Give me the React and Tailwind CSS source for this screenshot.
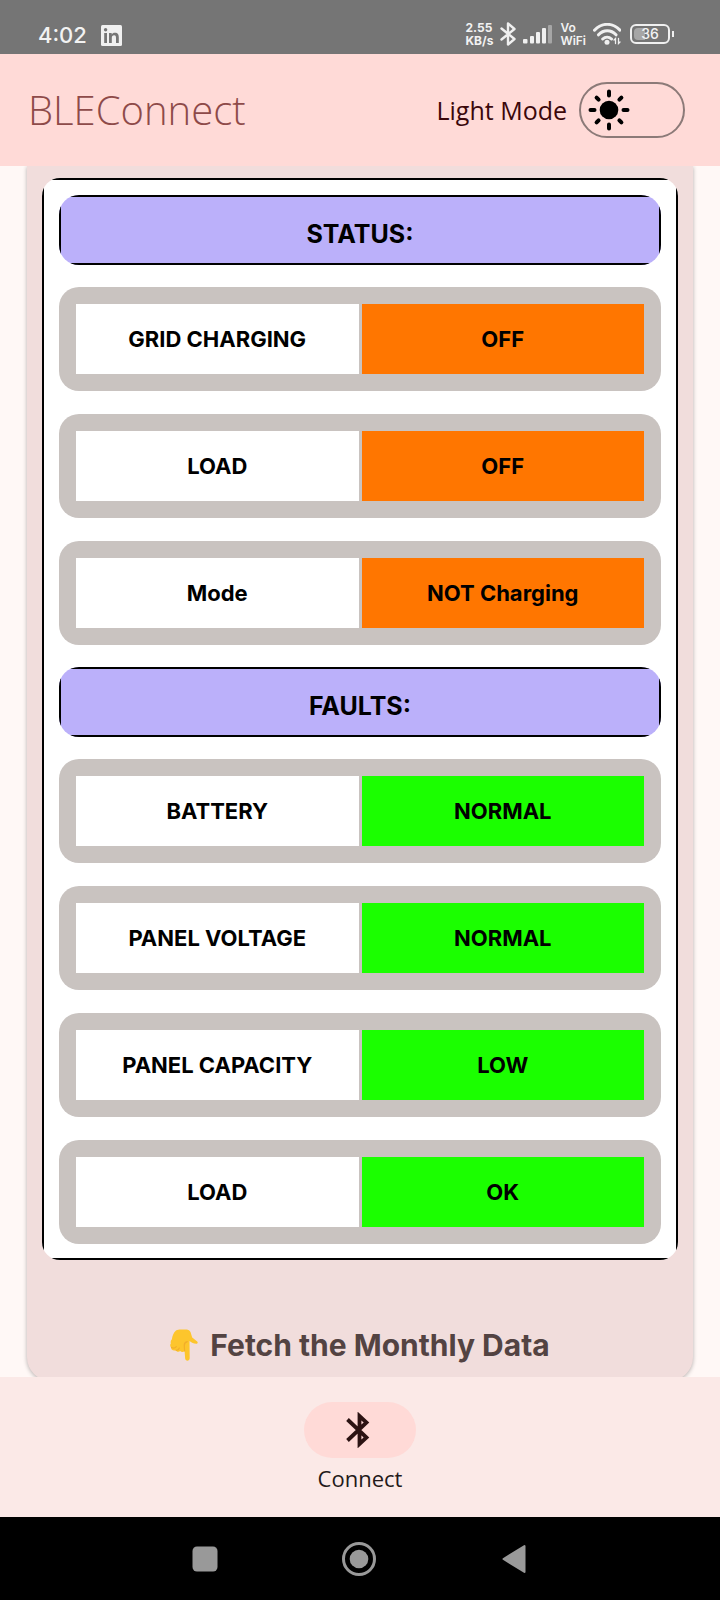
import { useState } from "react";

const STATUS_ROWS = [
  { label: "GRID CHARGING", value: "OFF", tone: "alert" },
  { label: "LOAD", value: "OFF", tone: "alert" },
  { label: "Mode", value: "NOT Charging", tone: "alert" },
];

const FAULT_ROWS = [
  { label: "BATTERY", value: "NORMAL", tone: "good" },
  { label: "PANEL VOLTAGE", value: "NORMAL", tone: "good" },
  { label: "PANEL CAPACITY", value: "LOW", tone: "good" },
  { label: "LOAD", value: "OK", tone: "good" },
];

const TONES = { alert: "bg-[#ff7600]", good: "bg-[#1bff00]" };

function StatusBar() {
  return (
    <div className="flex h-[54px] shrink-0 items-end justify-between bg-[#757575] pr-[46px] pb-[7px] pl-[38px] text-[#f2f2f2]">
      <div className="flex items-center gap-[14px]">
        <span className="font-['Inter',sans-serif] text-[22px] leading-6 font-medium">4:02</span>
        <svg width="21" height="21" viewBox="0 0 21 21" aria-label="LinkedIn">
          <rect width="21" height="21" rx="1.5" fill="#f0f0f0" />
          <g fill="#757575">
            <circle cx="4.6" cy="4.8" r="1.7" />
            <rect x="3.2" y="8" width="2.8" height="10" />
            <path d="M8 8h2.7v1.4c.6-1 1.700-1.700 3.200-1.700 3 0 3.900 1.900 3.900 4.600V18H15v-5.100c0-1.500-.3-2.700-1.900-2.700s-2.300 1.100-2.300 2.700V18H8z" />
          </g>
        </svg>
      </div>
      <div className="flex items-center gap-[7px] font-['Inter',sans-serif]">
        <div className="text-[12px] leading-[13px] font-bold">
          <div>2.55</div>
          <div>KB/s</div>
        </div>
        <svg width="16" height="24" viewBox="0 0 16 24" fill="none" stroke="#f0f0f0" strokeWidth="2.4" strokeLinejoin="round" strokeLinecap="round" aria-hidden="true">
          <path d="M1.500 6.500 14.500 17l-6.500 5.500V1.500L14.500 7 1.500 17.500" />
        </svg>
        <svg width="30" height="20" viewBox="0 0 30 20" fill="#f0f0f0" aria-hidden="true">
          <rect x="0" y="15" width="4.500" height="4.500" rx="1" />
          <rect x="7" y="12" width="4" height="7.500" rx="1" />
          <rect x="13" y="8" width="4" height="11.500" rx="1" />
          <rect x="19" y="4" width="4" height="15.500" rx="1" />
          <rect x="25" y="1" width="4" height="18.500" rx="1" fill="#a6a6a6" />
        </svg>
        <div className="text-[12px] leading-[13px] font-semibold">
          <div>Vo</div>
          <div>WiFi</div>
        </div>
        <svg width="28" height="22" viewBox="0 0 28 22" fill="none" stroke="#f0f0f0" strokeWidth="3" strokeLinecap="round" aria-hidden="true">
          <path d="M1.500 7.200C9-.6 19.500-.6 27 7.200M5.500 11.800c5-5.300 12.500-5.300 17.500 0M9.700 16c2.600-2.500 6.200-2.500 8.800 0" />
          <circle cx="14" cy="19.200" r="2.500" fill="#f0f0f0" stroke="none" />
          <path d="M22.500 20.500v-5L21 17M25.500 15.500v5L27 19" strokeWidth="1.300" />
        </svg>
        <div className="flex items-center gap-[2px] pl-[2px]">
          <div className="relative flex h-5 w-10 items-center justify-center rounded-md border-2 border-[#f0f0f0]">
            <span className="absolute inset-y-[2px] left-[2px] w-[11px] rounded-l-sm bg-[#a6a6a6]" />
            <span className="relative text-[14px] leading-4 font-medium">36</span>
          </div>
          <span className="h-[6px] w-[2px] bg-[#f0f0f0]" />
        </div>
      </div>
    </div>
  );
}

function SunIcon() {
  return (
    <svg width="42" height="42" viewBox="0 0 42 42" aria-hidden="true">
      <circle cx="21" cy="21" r="9.300" fill="#000" />
      <path
        d="M21 2.500v4M21 35.500v4M2.500 21h4M35.500 21h4M8.600 8.600l2 2M31.400 31.400l2 2M8.600 33.400l2-2M31.400 10.600l2-2"
        fill="none"
        stroke="#000"
        strokeWidth="4"
        strokeLinecap="round"
      />
    </svg>
  );
}

function Header() {
  const [light, setLight] = useState(true);
  return (
    <header className="flex h-28 shrink-0 items-center justify-between bg-[#ffdad7] pr-[35px] pl-7">
      <h1 className="text-[40px] leading-[48px] font-light text-[#8e4a49]">BLEConnect</h1>
      <div className="flex items-center gap-3">
        <span id="mode-label" className="text-[25px] leading-8 font-normal text-[#3b080b]">Light Mode</span>
        <button
          type="button"
          role="switch"
          aria-checked={light}
          aria-labelledby="mode-label"
          onClick={() => setLight(!light)}
          className="flex h-14 w-[106px] items-center rounded-full border-2 border-[#8c7a78] pl-[7px]"
        >
          <SunIcon />
        </button>
      </div>
    </header>
  );
}

function SectionTitle({ children }) {
  return (
    <div className="overflow-hidden rounded-[20px]">
      <h2 className="flex h-[70px] items-center justify-center border-2 border-black bg-[#bbb0fa] pt-2 font-['Inter',sans-serif] text-[25px] leading-8 font-bold text-black">
        {children}
      </h2>
    </div>
  );
}

function Rows({ rows }) {
  return (
    <dl className="flex flex-col gap-[23px]">
      {rows.map((row) => (
        <div
          key={row.label}
          className="grid grid-cols-2 gap-[3px] rounded-[20px] bg-[#c9c3c0] p-[17px] text-center font-['Inter',sans-serif] text-[22px] leading-[30px] font-bold text-black"
        >
          <dt className="bg-white py-5">{row.label}</dt>
          <dd className={`py-5 ${TONES[row.tone]}`}>{row.value}</dd>
        </div>
      ))}
    </dl>
  );
}

function PointDownIcon() {
  return (
    <svg width="28" height="32" viewBox="0 0 28 32" aria-hidden="true">
      <path
        d="M6 1.500C7.500.6 9 .4 11 .4h5.500c2 0 3.200.8 4 2.600l1.700 5.500 5 4c1 .8.300 2.300-1 2.200-2.500-.1-4.800-1-6.700-2.700l.2 17.300c0 3.200-4.500 3.200-4.600 0l-.5-7.300c-1 1.400-3.400 1.400-4.400-.1-1.500 1.300-3.700.9-4.500-.7C3.300 22 1 20.800 1.100 18.500 0 17.300-.1 15.600.9 14.300c-.6-1.600-.1-3 1-4C2.300 7 3.500 3.500 6 1.500z"
        fill="#fdc52c"
      />
      <path
        d="M1.500 18.500c2 1 3.600.6 4.800-.9M6 21.200c1.500.2 2.700-.6 3.300-2.200M14.600 22l-.3-5.500c-.1-2 1-3.300 3-3.800"
        fill="none"
        stroke="#f2ae2a"
        strokeWidth="1.200"
        strokeLinecap="round"
      />
    </svg>
  );
}

function BottomNav() {
  return (
    <nav className="flex h-[140px] shrink-0 justify-center bg-[#fbe9e7] pt-[25px]">
      <a href="#connect" className="flex flex-col items-center gap-1">
        <span className="flex h-14 w-28 items-center justify-center rounded-full bg-[#ffdad7]">
          <svg width="24" height="36" viewBox="0 0 24 36" fill="none" stroke="#2c1313" strokeWidth="3.800" aria-hidden="true" className="mr-1">
            <path d="M1.500 7.500 20.500 25.500l-7 6.500V4l7 6.500L1.500 28.500" />
          </svg>
        </span>
        <span className="text-[22px] leading-8 text-[#231919]">Connect</span>
      </a>
    </nav>
  );
}

function SystemNav() {
  return (
    <div className="grid h-[83px] shrink-0 grid-cols-[1fr_154px_154px_1fr] items-center bg-black">
      <button type="button" aria-label="Recent apps" className="-mr-3 justify-self-end">
        <svg width="26" height="26" viewBox="0 0 26 26" aria-hidden="true">
          <rect x=".5" y=".5" width="25" height="25" rx="4.500" fill="#999" />
        </svg>
      </button>
      <button type="button" aria-label="Home" className="-mr-4 justify-self-end">
        <svg width="34" height="34" viewBox="0 0 34 34" aria-hidden="true">
          <circle cx="17" cy="17" r="15.500" fill="none" stroke="#999" strokeWidth="3" />
          <circle cx="17" cy="17" r="9.300" fill="#999" />
        </svg>
      </button>
      <button type="button" aria-label="Back" className="-mr-3 justify-self-end">
        <svg width="24" height="30" viewBox="0 0 24 30" aria-hidden="true">
          <path d="M22.500 2v26L1.500 15z" fill="#999" stroke="#999" strokeWidth="2" strokeLinejoin="round" />
        </svg>
      </button>
    </div>
  );
}

export default function App() {
  return (
    <div className="flex min-h-screen flex-col bg-[#fff8f6] font-['Open_Sans',sans-serif]">
      <StatusBar />
      <Header />
      <main className="flex flex-1 flex-col overflow-hidden px-[27px]">
        <div className="-mb-1 flex-1 rounded-b-3xl bg-[#f1dddc] px-[15px] pt-3 shadow-[0_1px_4px_rgba(0,0,0,0.3)]">
          <div className="overflow-hidden rounded-[18px]">
            <div className="flex flex-col gap-[22px] border-2 border-black bg-white px-[15px] pt-[15px] pb-[14px]">
              <SectionTitle>STATUS:</SectionTitle>
              <Rows rows={STATUS_ROWS} />
              <SectionTitle>FAULTS:</SectionTitle>
              <Rows rows={FAULT_ROWS} />
            </div>
          </div>
          <div className="flex items-center justify-center gap-3 pt-[67px] text-[#534342]">
            <PointDownIcon />
            <p className="font-['Inter',sans-serif] text-[30px] leading-9 font-bold">Fetch the Monthly Data</p>
          </div>
        </div>
      </main>
      <BottomNav />
      <SystemNav />
    </div>
  );
}
